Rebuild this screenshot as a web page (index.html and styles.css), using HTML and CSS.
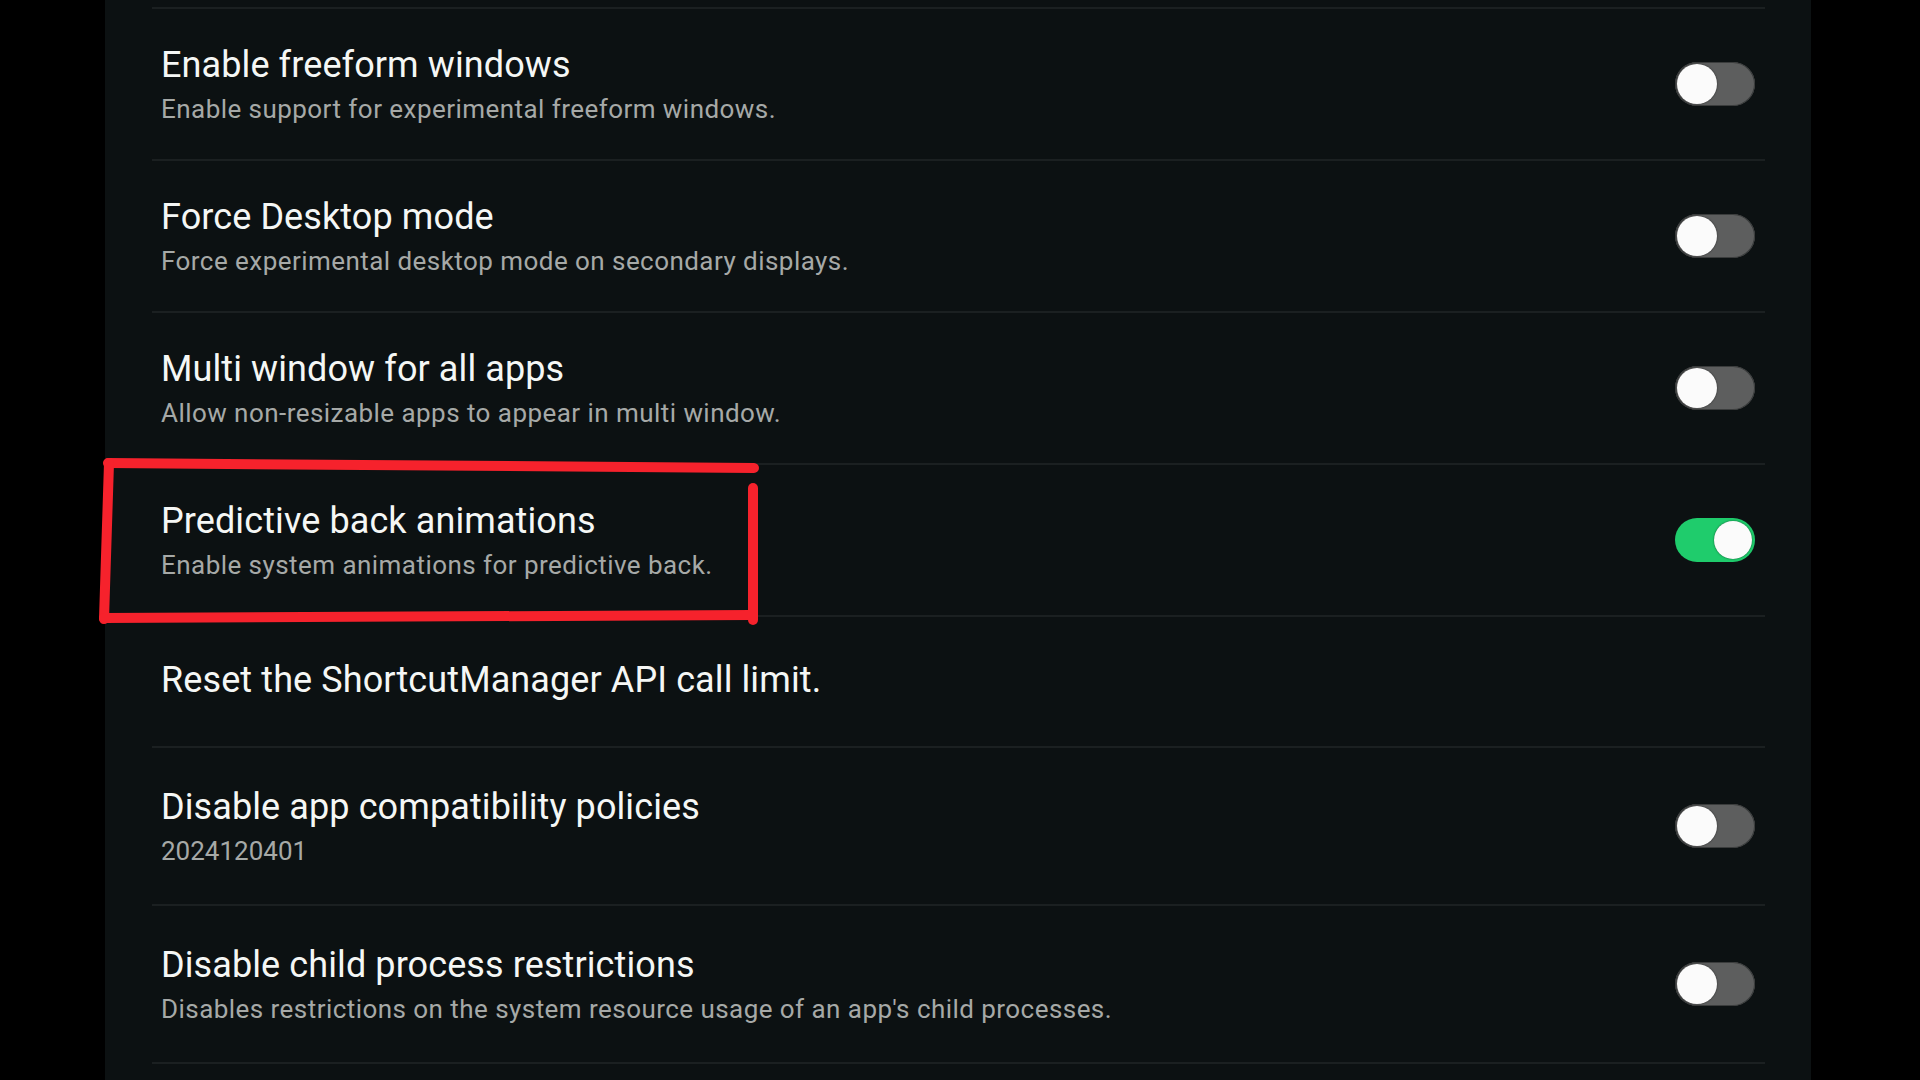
FILE: index.html
```html
<!DOCTYPE html>
<html lang="en">
<head>
<meta charset="utf-8">
<title>Developer options</title>
<link rel="stylesheet" href="styles.css">
</head>
<body>
<main class="panel">
  <ul class="list">
    <li class="row">
      <div class="text">
        <div class="title">Enable freeform windows</div>
        <div class="sub">Enable support for experimental freeform windows.</div>
      </div>
      <span class="toggle"><span class="knob"></span></span>
    </li>
    <li class="row">
      <div class="text">
        <div class="title">Force Desktop mode</div>
        <div class="sub">Force experimental desktop mode on secondary displays.</div>
      </div>
      <span class="toggle"><span class="knob"></span></span>
    </li>
    <li class="row">
      <div class="text">
        <div class="title">Multi window for all apps</div>
        <div class="sub">Allow non-resizable apps to appear in multi window.</div>
      </div>
      <span class="toggle"><span class="knob"></span></span>
    </li>
    <li class="row">
      <div class="text">
        <div class="title">Predictive back animations</div>
        <div class="sub">Enable system animations for predictive back.</div>
      </div>
      <span class="toggle toggle--on"><span class="knob"></span></span>
    </li>
    <li class="row row--single">
      <div class="text">
        <div class="title">Reset the ShortcutManager API call limit.</div>
      </div>
    </li>
    <li class="row row--tall">
      <div class="text">
        <div class="title">Disable app compatibility policies</div>
        <div class="sub sub--num">2024120401</div>
      </div>
      <span class="toggle"><span class="knob"></span></span>
    </li>
    <li class="row row--tall">
      <div class="text">
        <div class="title">Disable child process restrictions</div>
        <div class="sub">Disables restrictions on the system resource usage of an app's child processes.</div>
      </div>
      <span class="toggle"><span class="knob"></span></span>
    </li>
  </ul>
</main>
<svg class="annotation" width="1920" height="1080" viewBox="0 0 1920 1080" aria-hidden="true">
  <g stroke="#f6222c" stroke-width="10" stroke-linecap="round" fill="none">
    <line x1="108" y1="463" x2="754" y2="468"/>
    <line x1="109" y1="463" x2="104" y2="619"/>
    <line x1="104" y1="618" x2="752" y2="615"/>
    <line x1="753" y1="488" x2="753" y2="620"/>
  </g>
</svg>
</body>
</html>
```

FILE: styles.css
```css
html, body {
  margin: 0;
  padding: 0;
}

body {
  background: #000;
  width: 1920px;
  height: 1080px;
  overflow: hidden;
  font-family: Roboto, "Liberation Sans", sans-serif;
  display: flex;
  padding-left: 105px;
  box-sizing: border-box;
}

.panel {
  width: 1706px;
  height: 1080px;
  background: #0c1112;
  box-sizing: border-box;
  padding: 7px 46px 0 47px;
}

.list {
  list-style: none;
  margin: 0;
  padding: 0;
  border-bottom: 2px solid #1b2021;
}

.row {
  display: flex;
  align-items: center;
  justify-content: space-between;
  border-top: 2px solid #1b2021;
  padding: 31px 10px 31px 9px;
}

.row--single {
  padding-top: 38px;
  padding-bottom: 41px;
}

.row--tall {
  padding-top: 34px;
  padding-bottom: 34px;
}

.title {
  font-size: 36px;
  line-height: 50px;
  color: #f5f7f5;
  letter-spacing: 0.1px;
}

.sub {
  font-size: 26px;
  line-height: 38px;
  color: #a6a9a7;
  letter-spacing: 0.45px;
}

.sub--num {
  letter-spacing: 0;
}

.toggle {
  position: relative;
  width: 80px;
  height: 44px;
  border-radius: 22px;
  background: #5d5e5e;
  box-shadow: inset 0 0 0 1px #3a3c3c;
  display: flex;
  align-items: center;
  padding: 0 2px;
  box-sizing: border-box;
  flex-shrink: 0;
}

.knob {
  width: 40px;
  height: 40px;
  border-radius: 50%;
  background: #fbfbfb;
  box-shadow: 0 0 2px rgba(0, 0, 0, 0.6);
}

.toggle--on {
  background: #1fcc6c;
  box-shadow: none;
  justify-content: flex-end;
  padding: 0 3px;
}

.toggle--on .knob {
  width: 38px;
  height: 38px;
}

.annotation {
  position: absolute;
  left: 0;
  top: 0;
  pointer-events: none;
}
```
